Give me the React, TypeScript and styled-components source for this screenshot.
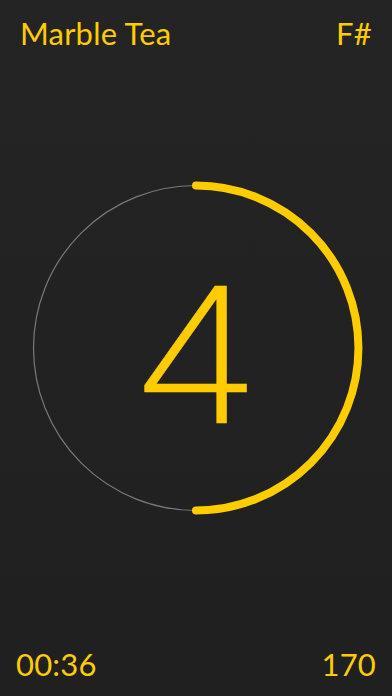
import React from "react";
import styled, { createGlobalStyle } from "styled-components";

const Global = createGlobalStyle`
  html, body { margin: 0; padding: 0; background: #222222; }
  body { font-family: Lato, "Open Sans", sans-serif; }
`;

const YELLOW = "#FFCC00";

const Screen = styled.div`
  width: 392px;
  height: 696px;
  background: linear-gradient(#242424, #202020);
  display: grid;
  grid-template-rows: 70px 1fr 70px;
  overflow: hidden;
`;

const Bar = styled.div<{ $bottom?: boolean }>`
  display: flex;
  justify-content: space-between;
  align-items: ${(p) => (p.$bottom ? "flex-end" : "flex-start")};
  padding: ${(p) => (p.$bottom ? "0 16px 13px 16px" : "14px 20px 0 20px")};
`;

const Label = styled.span`
  color: ${YELLOW};
  font-family: Lato, sans-serif;
  font-size: 31px;
  font-weight: 400;
  line-height: 38px;
  letter-spacing: 0.2px;
`;

const Center = styled.div`
  display: flex;
  align-items: center;
  justify-content: center;
`;

const Dial = styled.div`
  position: relative;
  width: 340px;
  height: 340px;
  display: flex;
  align-items: center;
  justify-content: center;
`;

const Ring = styled.svg`
  position: absolute;
  inset: 0;
`;

const Beat = styled.span`
  position: relative;
  color: ${YELLOW};
  font-family: Inter, sans-serif;
  font-weight: 200;
  font-size: 188px;
  line-height: 1;
  margin-top: 14px;
  -webkit-text-stroke: 0.5px ${YELLOW};
  transform: scaleX(1.14);
`;

export default function App() {
  return (
    <>
      <Global />
      <Screen>
        <Bar>
          <Label>Marble Tea</Label>
          <Label>F#</Label>
        </Bar>
        <Center>
          <Dial>
            <Ring width="340" height="340" viewBox="0 0 340 340">
              <circle cx="170" cy="170" r="162.5" fill="none" stroke="#7a7a7a" strokeWidth="1.2" />
              <path
                d="M170 7.5 A162.5 162.5 0 0 1 170 332.5"
                fill="none"
                stroke={YELLOW}
                strokeWidth="8"
                strokeLinecap="round"
              />
            </Ring>
            <Beat>4</Beat>
          </Dial>
        </Center>
        <Bar $bottom>
          <Label>00:36</Label>
          <Label>170</Label>
        </Bar>
      </Screen>
    </>
  );
}
